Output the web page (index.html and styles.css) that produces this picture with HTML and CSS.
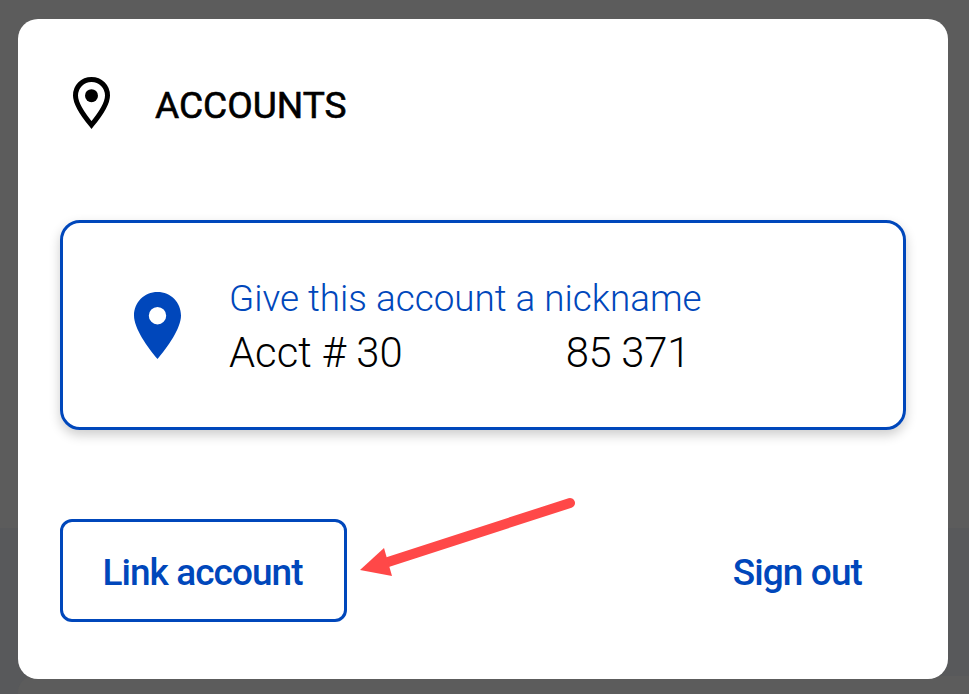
FILE: index.html
```html
<!DOCTYPE html>
<html lang="en">
<head>
  <meta charset="UTF-8" />
  <meta name="viewport" content="width=device-width, initial-scale=1.0"/>
  <title>Accounts</title>
  <link rel="stylesheet" href="styles.css">
</head>
<body>

  <div class="backdrop-sheet"></div>
  <div class="backdrop-card"></div>

  <div class="modal">
    <header class="modal-header">
      <svg class="header-icon" viewBox="0 0 37 53" aria-hidden="true">
        <path d="M18.5 2.500C9.500 2.500 2.500 9.500 2.500 18.500 2.500 28 11 39 18.500 48 26 39 34.500 28 34.500 18.500 34.500 9.500 27.500 2.500 18.500 2.500Z" fill="none" stroke="#000" stroke-width="5"/>
        <circle cx="18.500" cy="18.700" r="6.500" fill="#000"/>
      </svg>
      <span class="header-title">ACCOUNTS</span>
    </header>

    <div class="account-card">
      <svg class="account-icon" viewBox="0 0 47 67" aria-hidden="true">
        <path fill-rule="evenodd" d="M23.500 0C10.300 0 0 10.300 0 23.500 0 36.500 13.500 55 23.500 67 33.500 55 47 36.500 47 23.500 47 10.300 36.700 0 23.500 0ZM23.500 15A8.700 8.700 0 1 1 23.500 32.400 8.700 8.700 0 1 1 23.500 15Z" fill="#0047bb"/>
      </svg>
      <div class="account-text">
        <div class="account-nickname">Give this account a nickname</div>
        <div class="account-number"><span>Acct # 30</span><span class="account-suffix">85 371</span></div>
      </div>
    </div>

    <div class="modal-actions">
      <button class="link-btn">Link account</button>
      <button class="signout-btn">Sign out</button>
    </div>
  </div>

  <!-- annotation arrow drawn over the dialog -->
  <svg class="arrow" viewBox="0 0 969 694" aria-hidden="true">
    <line x1="570" y1="503" x2="388" y2="562" stroke="#ff4848" stroke-width="10" stroke-linecap="round"/>
    <polygon points="360,570 384,548 392,576" fill="#ff4848"/>
  </svg>

</body>
</html>
```

FILE: styles.css
```css
* {
  box-sizing: border-box;
  margin: 0;
  padding: 0;
}

body {
  font-family: Roboto, 'Liberation Sans', sans-serif;
  background-color: #5c5c5c;
  height: 694px;
  overflow: hidden;
  padding: 19px 21px 15px 18px;
}

/* BACKDROP */
.backdrop-sheet {
  position: absolute;
  top: 528px;
  left: 0;
  right: 0;
  bottom: 0;
  background-color: #58595b;
}

.backdrop-card {
  position: absolute;
  top: 676px;
  left: 18px;
  right: 0;
  bottom: 0;
  background-color: #5c5c5c;
  border-top-left-radius: 16px;
}

/* DIALOG */
.modal {
  position: relative;
  background-color: white;
  border-radius: 20px;
  height: 660px;
  padding: 0 42px;
}

.modal-header {
  display: flex;
  align-items: center;
  height: 172px;
  padding-left: 13px;
}

.header-icon {
  width: 37px;
  height: 53px;
  margin-right: 45px;
  margin-bottom: 3px;
}

.header-title {
  font-size: 37.100px;
  font-weight: 400;
  color: black;
  -webkit-text-stroke: 0.600px black;
}

.account-card {
  display: flex;
  align-items: center;
  height: 210px;
  margin-top: 29px;
  padding-left: 71px;
  border: 3px solid #0047bb;
  border-radius: 20px;
  box-shadow: 0 5px 12px rgba(0, 0, 0, 0.2);
}

.account-icon {
  width: 47px;
  height: 67px;
  margin-right: 48px;
}

.account-text {
  padding-top: 2px;
}

.account-nickname {
  font-size: 36.850px;
  font-weight: 300;
  color: #0047bb;
  line-height: 54px;
}

.account-number {
  display: flex;
  gap: 163px;
  font-size: 41.800px;
  font-weight: 300;
  color: black;
  line-height: 54px;
}

.account-suffix {
  letter-spacing: -0.300px;
}

.modal-actions {
  display: flex;
  align-items: center;
  justify-content: space-between;
  margin-top: 89px;
}

.link-btn {
  width: 287px;
  height: 103px;
  padding: 3px 2px 0 0;
  background: white;
  border: 3px solid #0047bb;
  border-radius: 12px;
  color: #0047bb;
  font-family: inherit;
  font-size: 37px;
  font-weight: 500;
  letter-spacing: -0.950px;
}

.signout-btn {
  background: none;
  border: none;
  margin-right: 44px;
  padding-top: 3px;
  color: #0047bb;
  font-family: inherit;
  font-size: 37px;
  font-weight: 500;
  letter-spacing: -0.900px;
}

/* ANNOTATION */
.arrow {
  position: absolute;
  top: 0;
  left: 0;
  width: 969px;
  height: 694px;
}
```
